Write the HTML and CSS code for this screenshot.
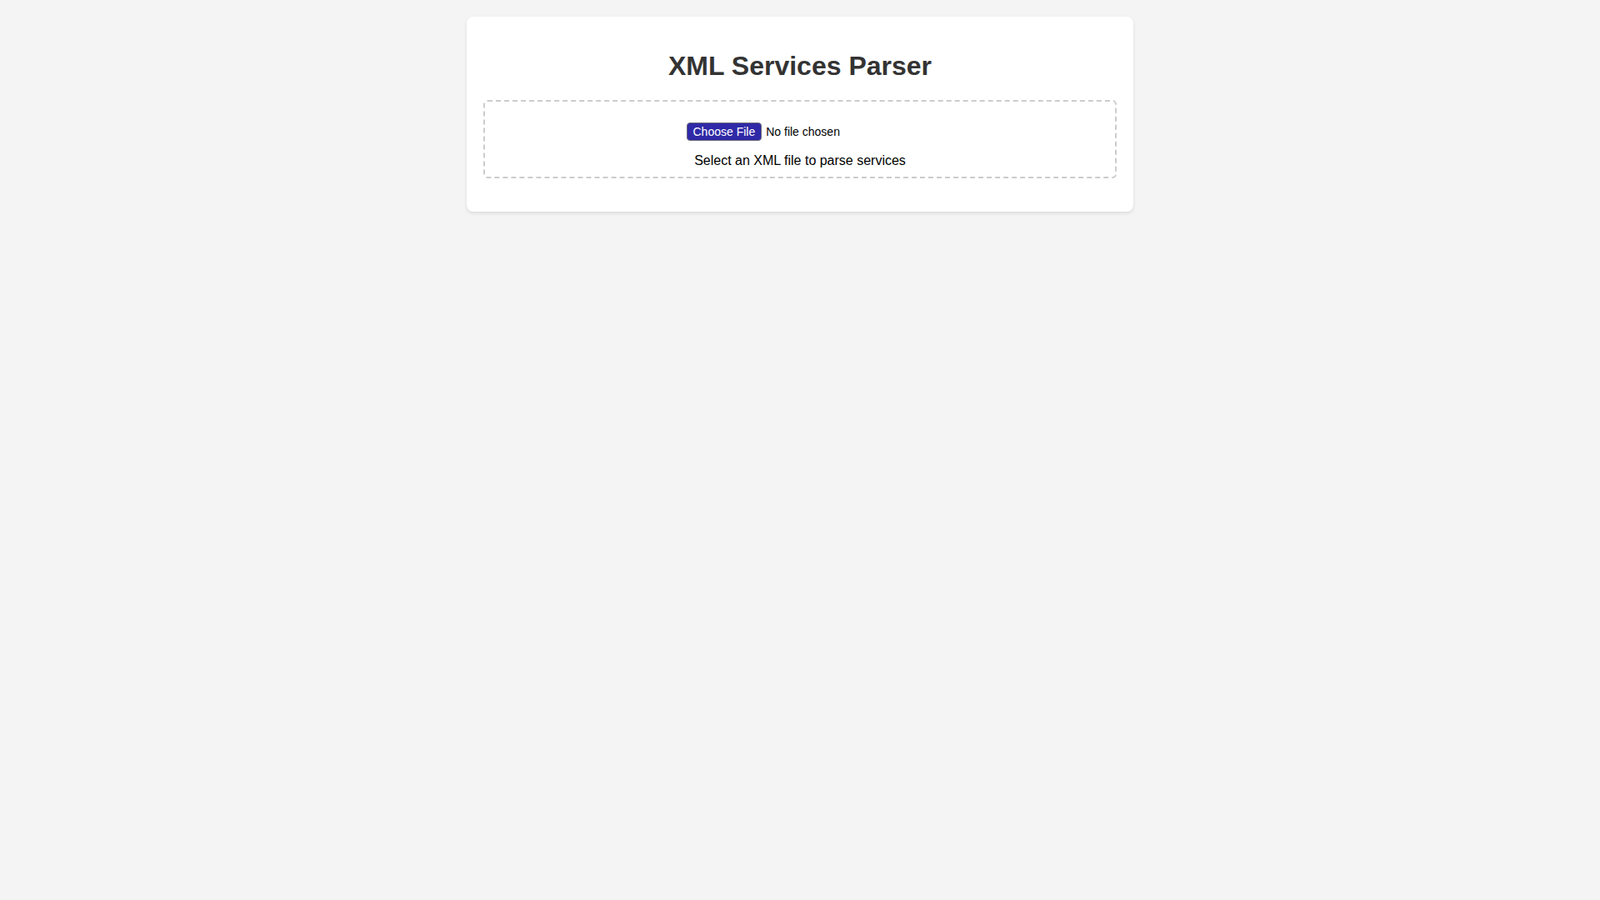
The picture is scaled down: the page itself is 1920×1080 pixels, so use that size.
FILE: index.html
```html
<!DOCTYPE html>
<html lang="en">
<head>
<meta charset="utf-8">
<title>XML Services Parser</title>
<link rel="stylesheet" href="styles.css">
</head>
<body>
<div class="container">
  <h1 class="title">XML Services Parser</h1>
  <div class="upload-area">
    <input type="file" class="file-input" accept=".xml">
    <p class="hint">Select an XML file to parse services</p>
  </div>
  <div class="results"></div>
</div>
</body>
</html>
```
FILE: styles.css
```css
html, body {
  margin: 0;
  padding: 0;
}
body {
  background: #f4f4f4;
  font-family: "Liberation Sans", Arial, sans-serif;
  color: #000;
  padding: 20px;
}
.container {
  max-width: 800px;
  margin: 0 auto;
  background: #fff;
  border-radius: 8px;
  box-shadow: 0 2px 4px rgba(0, 0, 0, 0.1);
  padding: 20px;
  box-sizing: border-box;
}
.title {
  font-size: 32px;
  font-weight: bold;
  color: #333;
  text-align: center;
  margin: 21px 0 22px;
}
.upload-area {
  border: 2px dashed #ccc;
  border-radius: 5px;
  padding: 25px 20px 10px;
  text-align: center;
  margin-bottom: 20px;
}
.file-input {
  font-family: "Liberation Sans", Arial, sans-serif;
  font-size: 14px;
  color: #000;
  margin-right: 8px;
}
.file-input::file-selector-button {
  background: #2f29a7;
  color: #fff;
  border: 1px solid #6b6b7a;
  border-radius: 4px;
  padding: 1px 7px;
  font-family: "Liberation Sans", Arial, sans-serif;
  font-size: 14px;
  height: 22px;
  margin-right: 5px;
}
.hint {
  font-size: 16px;
  margin: 15px 0 0;
}
```
